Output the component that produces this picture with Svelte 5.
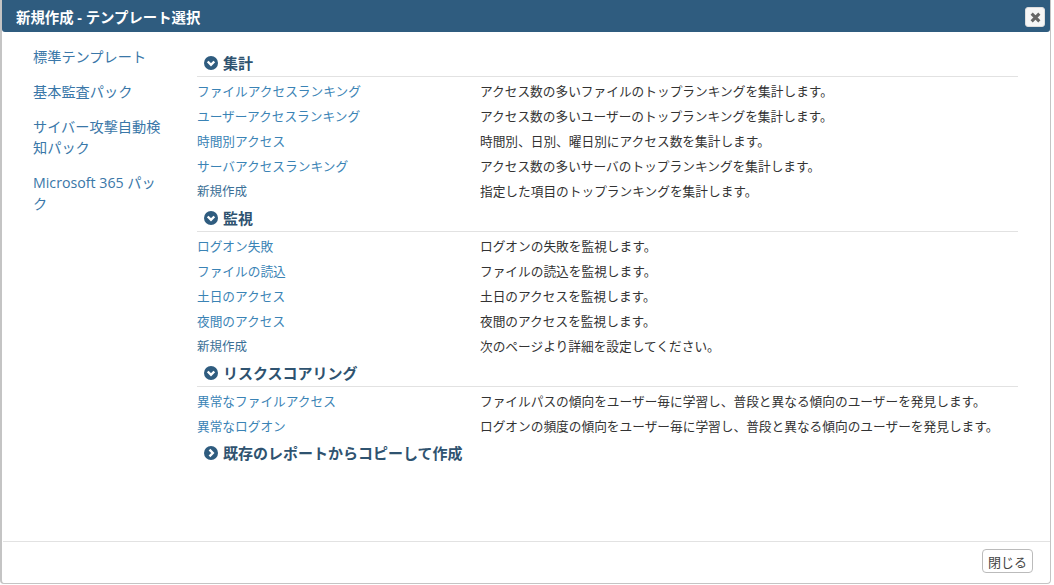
<script>
  const side = ['標準テンプレート', '基本監査パック', 'サイバー攻撃自動検知パック', 'Microsoft 365 パック'];
  const sections = [
    { title: '集計', open: true, rows: [
      ['ファイルアクセスランキング', 'アクセス数の多いファイルのトップランキングを集計します。', true],
      ['ユーザーアクセスランキング', 'アクセス数の多いユーザーのトップランキングを集計します。', true],
      ['時間別アクセス', '時間別、日別、曜日別にアクセス数を集計します。', true],
      ['サーバアクセスランキング', 'アクセス数の多いサーバのトップランキングを集計します。', true],
      ['新規作成', '指定した項目のトップランキングを集計します。', false]
    ]},
    { title: '監視', open: true, rows: [
      ['ログオン失敗', 'ログオンの失敗を監視します。', true],
      ['ファイルの読込', 'ファイルの読込を監視します。', true],
      ['土日のアクセス', '土日のアクセスを監視します。', true],
      ['夜間のアクセス', '夜間のアクセスを監視します。', true],
      ['新規作成', '次のページより詳細を設定してください。', false]
    ]},
    { title: 'リスクスコアリング', open: true, rows: [
      ['異常なファイルアクセス', 'ファイルパスの傾向をユーザー毎に学習し、普段と異なる傾向のユーザーを発見します。', true],
      ['異常なログオン', 'ログオンの頻度の傾向をユーザー毎に学習し、普段と異なる傾向のユーザーを発見します。', true]
    ]},
    { title: '既存のレポートからコピーして作成', open: false, rows: [] }
  ];
</script>

<div class="dialog">
  <header class="bar">
    <span class="title">新規作成 - テンプレート選択</span>
    <button class="close" aria-label="閉じる">
      <svg width="11" height="11" viewBox="0 0 10 10"><path d="M1.5 1.5 8.5 8.5M8.5 1.5 1.5 8.5" stroke="#666" stroke-width="2.8" /></svg>
    </button>
  </header>
  <div class="body">
    <nav class="side">
      {#each side as s}<a href="#top">{s}</a>{/each}
    </nav>
    <main class="content">
      {#each sections as sec}
        <section>
          <h3 class:plain={!sec.open}>
            <svg width="14" height="14" viewBox="0 0 14 14">
              <circle cx="7" cy="7" r="7" fill="#2f5c7f" />
              {#if sec.open}
                <path d="M3.7 5.5 7 8.8 10.3 5.5" fill="none" stroke="#fff" stroke-width="2.4" />
              {:else}
                <path d="M5.5 3.7 8.8 7 5.5 10.3" fill="none" stroke="#fff" stroke-width="2.4" />
              {/if}
            </svg>
            <span>{sec.title}</span>
          </h3>
          {#each sec.rows as r}
            <div class="row">
              <a href="#top" class:small={!r[2]}>{r[0]}</a>
              <span>{r[1]}</span>
            </div>
          {/each}
        </section>
      {/each}
    </main>
  </div>
  <footer class="foot">
    <button class="shut">閉じる</button>
  </footer>
</div>

<style>
  :global(body) {
    margin: 0;
    background: #fff;
    font-family: "Open Sans", "Noto Sans CJK JP", sans-serif;
  }
  .dialog {
    width: 1051px;
    height: 584px;
    box-sizing: border-box;
    border-left: 2px solid #c4c4c4;
    border-right: 1px solid #c4c4c4;
    border-bottom: 1px solid #c4c4c4;
    border-radius: 0 0 4px 4px;
    display: flex;
    flex-direction: column;
    background: #fff;
  }
  .bar {
    height: 32px;
    background: #2f5c7f;
    border-radius: 0 0 3px 3px;
    box-sizing: border-box;
    display: flex;
    align-items: center;
    justify-content: space-between;
    padding: 0 5px 0 14px;
    flex: none;
  }
  .title {
    color: #fff;
    font-size: 14.4px;
    font-weight: 700;
  }
  .close {
    width: 20px;
    height: 20px;
    padding: 0;
    border: 1px solid #ddd;
    border-radius: 3px;
    background: #f6f6f6;
    display: flex;
    align-items: center;
    justify-content: center;
    margin-top: 2px;
  }
  .body {
    flex: 1;
    display: flex;
    min-height: 0;
  }
  .side {
    width: 195px;
    box-sizing: border-box;
    padding: 14px 32px 0 31px;
    flex: none;
    display: flex;
    flex-direction: column;
    gap: 14px;
  }
  .side a {
    color: #3a77a8;
    font-size: 14.2px;
    line-height: 21px;
    text-decoration: none;
  }
  .content {
    width: 821px;
    padding-top: 20px;
  }
  h3 {
    margin: 0 0 1px;
    height: 25px;
    box-sizing: border-box;
    padding-left: 7px;
    border-bottom: 1px solid #e2e2e2;
    color: #2f5370;
    font-size: 15px;
    font-weight: 700;
    line-height: 22px;
    display: flex;
    align-items: flex-start;
    gap: 5px;
  }
  h3 svg {
    margin-top: 4px;
    flex: none;
  }
  h3.plain {
    border-bottom: 0;
  }
  section + section h3 {
    margin-top: 4px;
  }
  .row {
    height: 25px;
    display: flex;
    align-items: center;
    font-size: 12.7px;
    color: #333;
  }
  .row a {
    width: 283px;
    flex: none;
    color: #3a83b5;
    text-decoration: none;
  }
  .row a.small {
    color: #3a6f96;
    font-size: 12.5px;
  }
  .foot {
    flex: none;
    height: 42px;
    box-sizing: border-box;
    margin-left: 1px;
    border-top: 1px solid #e2e2e2;
    display: flex;
    justify-content: flex-end;
    padding: 7px 17px 0 0;
  }
  .shut {
    width: 51px;
    height: 24px;
    padding: 0;
    border: 1px solid #bbb;
    border-radius: 4px;
    background: #fff;
    color: #444;
    font: 13px "Open Sans", "Noto Sans CJK JP", sans-serif;
  }
</style>
